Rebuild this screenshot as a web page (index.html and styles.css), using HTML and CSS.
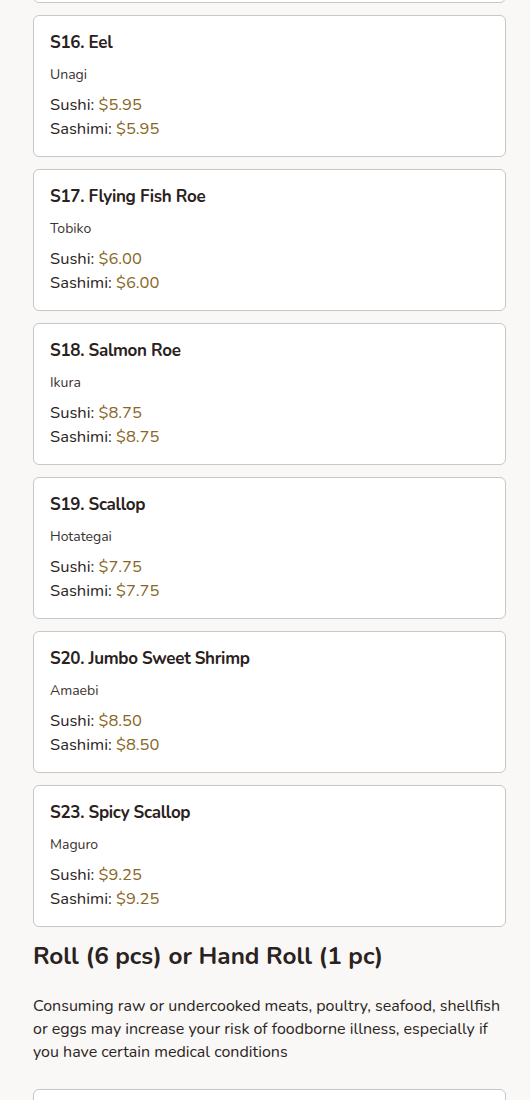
FILE: index.html
```html
<!DOCTYPE html>
<html>
<head>
<meta charset="utf-8">
<link rel="stylesheet" href="styles.css">
</head>
<body>
<div class="page">
  <div class="list">
    <div class="card">
      <div class="title">S15. Octopus</div>
      <div class="sub">Tako</div>
      <div class="prices"><div>Sushi: <span class="p">$5.50</span></div><div>Sashimi: <span class="p">$5.50</span></div></div>
    </div>
    <div class="card">
      <div class="title">S16. Eel</div>
      <div class="sub">Unagi</div>
      <div class="prices"><div>Sushi: <span class="p">$5.95</span></div><div>Sashimi: <span class="p">$5.95</span></div></div>
    </div>
    <div class="card">
      <div class="title">S17. Flying Fish Roe</div>
      <div class="sub">Tobiko</div>
      <div class="prices"><div>Sushi: <span class="p">$6.00</span></div><div>Sashimi: <span class="p">$6.00</span></div></div>
    </div>
    <div class="card">
      <div class="title">S18. Salmon Roe</div>
      <div class="sub">Ikura</div>
      <div class="prices"><div>Sushi: <span class="p">$8.75</span></div><div>Sashimi: <span class="p">$8.75</span></div></div>
    </div>
    <div class="card">
      <div class="title">S19. Scallop</div>
      <div class="sub">Hotategai</div>
      <div class="prices"><div>Sushi: <span class="p">$7.75</span></div><div>Sashimi: <span class="p">$7.75</span></div></div>
    </div>
    <div class="card">
      <div class="title">S20. Jumbo Sweet Shrimp</div>
      <div class="sub">Amaebi</div>
      <div class="prices"><div>Sushi: <span class="p">$8.50</span></div><div>Sashimi: <span class="p">$8.50</span></div></div>
    </div>
    <div class="card">
      <div class="title">S23. Spicy Scallop</div>
      <div class="sub">Maguro</div>
      <div class="prices"><div>Sushi: <span class="p">$9.25</span></div><div>Sashimi: <span class="p">$9.25</span></div></div>
    </div>
  </div>
  <h2 class="section">Roll (6 pcs) or Hand Roll (1 pc)</h2>
  <p class="note">Consuming raw or undercooked meats, poultry, seafood, shellfish or eggs may increase your risk of foodborne illness, especially if you have certain medical conditions</p>
  <div class="list">
    <div class="card">
      <div class="title">R1. California Roll</div>
      <div class="sub">Crab, avocado, cucumber</div>
      <div class="prices"><div>Roll: <span class="p">$6.50</span></div><div>Hand Roll: <span class="p">$6.50</span></div></div>
    </div>
  </div>
</div>
</body>
</html>
```
FILE: styles.css
```css
html, body {
  margin: 0;
  padding: 0;
  background: #f9f8f6;
}
body {
  font-family: "Nunito", "Lato", "Open Sans", sans-serif;
  color: #2b2422;
  overflow: hidden;
}
.page {
  padding: 0 24px 0 33px;
  margin-top: -139px;
}
.list {
  display: flex;
  flex-direction: column;
  gap: 12px;
}
.card {
  background: #fff;
  border: 1px solid #c9c7c5;
  border-radius: 6px;
  padding: 17px 16px 15px;
}
.title {
  font-size: 17px;
  font-weight: 700;
  line-height: 20px;
  letter-spacing: -0.3px;
  color: #2a2220;
}
.sub {
  margin-top: 12px;
  font-size: 14px;
  line-height: 20px;
  color: #3a3230;
}
.prices {
  margin-top: 8px;
  font-size: 16.5px;
  line-height: 24px;
  color: #2b2422;
}
.p {
  color: #876626;
}
.section {
  margin: 14px 0 0;
  font-size: 24.3px;
  line-height: 30px;
  font-weight: 700;
  color: #2a2220;
}
.note {
  margin: 24px 0 25px;
  font-size: 16px;
  line-height: 23px;
  color: #2b2422;
}
```
